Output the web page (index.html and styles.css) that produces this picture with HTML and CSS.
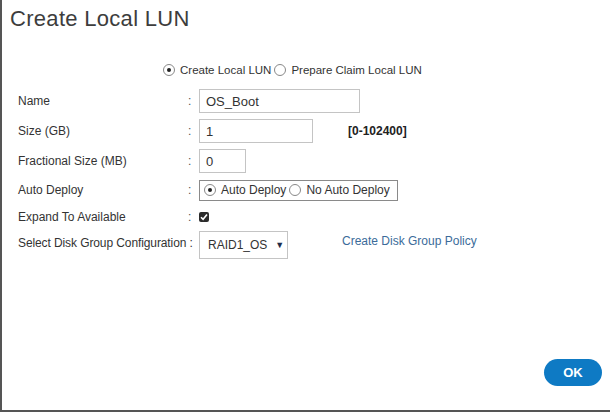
FILE: index.html
```html
<!DOCTYPE html>
<html lang="en">
<head>
  <meta charset="UTF-8" />
  <title>Create Local LUN</title>
  <link rel="stylesheet" href="styles.css">
</head>
<body>
  <div class="dialog">
    <h1>Create Local LUN</h1>

    <div class="mode-row">
      <span class="radio checked"></span><span class="opt">Create Local LUN</span>
      <span class="radio"></span><span class="opt">Prepare Claim Local LUN</span>
    </div>

    <div class="form">
      <div class="row">
        <label>Name</label><span class="colon">:</span>
        <div class="field"><input class="text name" type="text" value="OS_Boot"></div>
      </div>
      <div class="row">
        <label>Size (GB)</label><span class="colon">:</span>
        <div class="field"><input class="text size" type="text" value="1"><span class="range">[0-102400]</span></div>
      </div>
      <div class="row">
        <label>Fractional Size (MB)</label><span class="colon">:</span>
        <div class="field"><input class="text frac" type="text" value="0"></div>
      </div>
      <div class="row short">
        <label>Auto Deploy</label><span class="colon">:</span>
        <div class="field">
          <div class="radio-box">
            <span class="radio checked"></span><span class="opt">Auto Deploy</span>
            <span class="radio"></span><span class="opt">No Auto Deploy</span>
          </div>
        </div>
      </div>
      <div class="row shorter">
        <label>Expand To Available</label><span class="colon">:</span>
        <div class="field">
          <span class="check">
            <svg width="8" height="8" viewBox="0 0 8 8"><path d="M1 4.2 L3.1 6.3 L7 1.6" fill="none" stroke="#fff" stroke-width="1.6"/></svg>
          </span>
        </div>
      </div>
      <div class="row shorter">
        <label class="nowrap">Select Disk Group Configuration :</label><span class="colon"></span>
        <div class="field">
          <div class="select"><span>RAID1_OS</span><span class="arrow">&#9660;</span></div>
          <a href="#" class="policy">Create Disk Group Policy</a>
        </div>
      </div>
    </div>

    <div class="footer">
      <button class="ok">OK</button>
    </div>
  </div>
</body>
</html>
```

FILE: styles.css
```css
body {
  margin: 0;
  font-family: 'Liberation Sans', Arial, sans-serif;
  background-color: white;
  color: #333;
}
.dialog {
  box-sizing: border-box;
  height: 412px;
  border-left: 2px solid #555;
  border-bottom: 2px solid #555;
  display: flex;
  flex-direction: column;
}
h1 {
  margin: 0;
  padding: 6px 0 0 8px;
  font-size: 22px;
  letter-spacing: 0.3px;
  font-weight: normal;
  line-height: 26px;
  color: #3d3d3d;
}
.mode-row {
  display: flex;
  align-items: center;
  margin-top: 30px;
  padding-left: 161px;
  font-size: 11.5px;
  height: 16px;
}
.radio {
  box-sizing: border-box;
  width: 12px;
  height: 12px;
  border: 1px solid #888;
  border-radius: 50%;
  display: inline-flex;
  align-items: center;
  justify-content: center;
  margin-right: 5px;
}
.radio.checked::after {
  content: '';
  width: 4px;
  height: 4px;
  border-radius: 50%;
  background-color: #222;
}
.opt {
  margin-right: 3px;
}

/* form grid */
.form {
  margin-top: 8px;
  padding-left: 16px;
  font-size: 12px;
}
.row {
  display: flex;
  align-items: center;
  height: 30px;
}
.row.short {
  height: 28px;
}
.row.shorter {
  height: 26px;
}
.row label {
  width: 170px;
}
.nowrap {
  white-space: nowrap;
  letter-spacing: -0.1px;
}
.colon {
  width: 11px;
  color: #555;
}
.field {
  display: flex;
  align-items: center;
}
input.text {
  box-sizing: border-box;
  height: 24px;
  border: 1px solid #c4c4c4;
  padding: 0 6px;
  font-family: inherit;
  font-size: 13px;
  color: #333;
  margin: 0;
}
input.name { width: 161px; }
input.size { width: 114px; }
input.frac { width: 47px; }
.range {
  margin-left: 35px;
  font-weight: bold;
  color: #222;
}
.radio-box {
  box-sizing: border-box;
  display: flex;
  align-items: center;
  width: 199px;
  height: 21px;
  border: 1px solid #8a8a8a;
  padding-left: 4px;
}
.check {
  width: 10px;
  height: 10px;
  border-radius: 2px;
  background-color: #2b2b2b;
  display: inline-flex;
  align-items: center;
  justify-content: center;
}
.select {
  box-sizing: border-box;
  width: 89px;
  height: 28px;
  margin-top: 4px;
  border: 1px solid #c4c4c4;
  display: flex;
  align-items: center;
  gap: 8px;
  padding: 0 0 0 8px;
  font-size: 12px;
}
.arrow {
  font-size: 9px;
  color: #1f2d4a;
}
a.policy {
  margin-left: 54px;
  color: #3b6b9a;
  text-decoration: none;
  margin-top: -4px;
}

.footer {
  margin-top: auto;
  display: flex;
  justify-content: flex-end;
  padding: 0 8px 24px 0;
}
button.ok {
  width: 58px;
  height: 27px;
  border: none;
  border-radius: 14px;
  background-color: #0e7ac4;
  color: white;
  font-family: inherit;
  font-weight: bold;
  font-size: 13px;
}
```
